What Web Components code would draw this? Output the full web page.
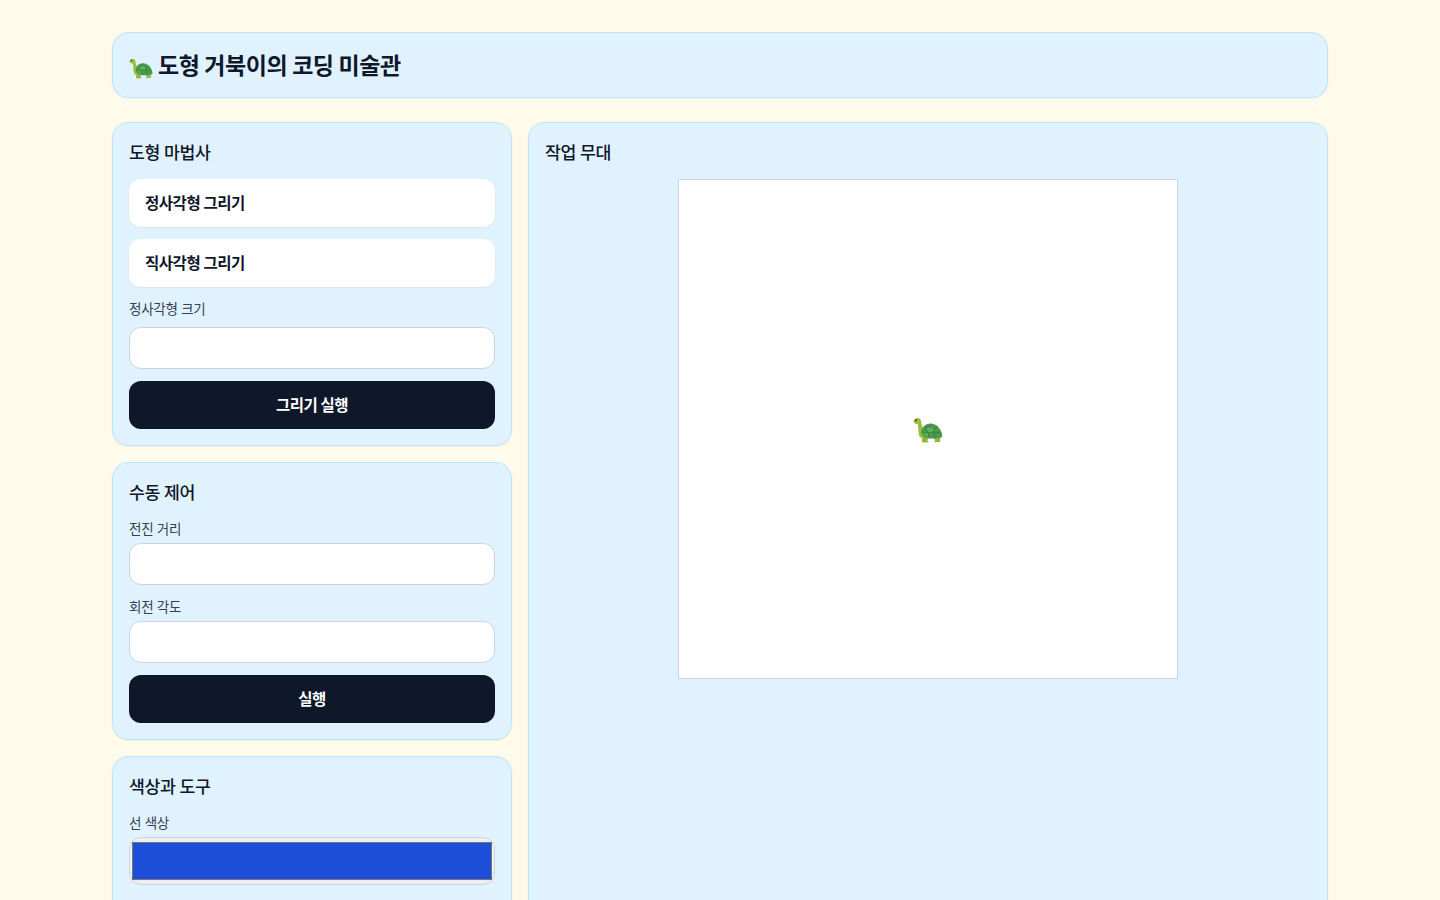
<!DOCTYPE html>
<html lang="ko"><head><meta charset="utf-8"><title>도형 거북이의 코딩 미술관</title>
<style>
html,body{margin:0;padding:0;background:#fffbeb}
body{font-family:Inter,"Noto Sans CJK KR",sans-serif;color:#0f172a}
</style></head><body>
<turtle-app>
  <app-panel slot="header" kind="header"><h-title><turtle-icon size="24"></turtle-icon> 도형 거북이의 코딩 미술관</h-title></app-panel>
  <app-panel slot="left" heading="도형 마법사">
    <wizard-button>정사각형 그리기</wizard-button>
    <wizard-button>직사각형 그리기</wizard-button>
    <field-input label="정사각형 크기" gap="8"></field-input>
    <run-button>그리기 실행</run-button>
  </app-panel>
  <app-panel slot="left" heading="수동 제어">
    <field-input label="전진 거리"></field-input>
    <field-input label="회전 각도"></field-input>
    <run-button>실행</run-button>
  </app-panel>
  <app-panel slot="left" heading="색상과 도구" tall>
    <field-input label="선 색상" type="color" value="#1d4ed8"></field-input>
  </app-panel>
  <app-panel slot="right" heading="작업 무대" fill>
    <turtle-stage></turtle-stage>
  </app-panel>
</turtle-app>
<script>
function def(name,css,html){
  customElements.define(name,class extends HTMLElement{
    connectedCallback(){
      if(this.shadowRoot)return;
      const r=this.attachShadow({mode:'open'});
      r.innerHTML='<style>'+css+'</style>'+(typeof html==='function'?html(this):html);
    }
  });
}
def('turtle-app',
 ':host{display:block;box-sizing:border-box;max-width:1280px;margin:0 auto;padding:32px}.g{display:grid;grid-template-columns:400px 1fr;gap:16px;margin-top:24px}.l{display:flex;flex-direction:column;gap:16px}.r{display:flex}',
 '<slot name="header"></slot><div class="g"><div class="l"><slot name="left"></slot></div><div class="r"><slot name="right"></slot></div></div>');
def('h-title',
 ':host{display:block;box-sizing:border-box;height:32px;padding-top:2px;font-size:23px;line-height:30px;font-weight:700;letter-spacing:-.02em;color:#0f172a}',
 '<slot></slot>');
def('turtle-icon',
 ':host{display:inline-block;vertical-align:-5px;line-height:0;letter-spacing:0}svg{display:block}',
 h=>{const s=+h.getAttribute('size')||30;return `<svg role="img" aria-label="turtle" width="${s}" height="${s*26/30}" viewBox="0 0 30 26">
  <path d="M25 20 L29.5 19.5 L26 22.5Z" fill="#86a532"/>
  <path d="M2 2.2 C4 0 7.4 .8 8 4 C8.5 7 9 10 11 13 L14 21 L7 20.5 C5 16 5.5 10 4.8 7 C3 7 .4 6 .4 4.4 C.4 3.6 1.2 2.8 2 2.2Z" fill="#9cbc3f"/>
  <path d="M9 20 L15 20 L14.5 24 L16 25.2 L9.5 25.5 C8.6 24 9 22 9 20Z" fill="#96b53a"/>
  <path d="M20 19 L27 19 L27.4 24.8 L21 25.3 L22.2 23.4 C21.2 22 20.4 20.5 20 19Z" fill="#96b53a"/>
  <path d="M8.2 16 C8.5 10 12.5 6.6 17.5 6.6 C23.5 6.6 28.5 12 29.4 19 C28 20.8 23 21.6 18 21.6 C13.5 21.6 10 20 8.2 16Z" fill="#4a9a4c"/>
  <path d="M12.5 10.5 L17 9.5 L21.5 11.5 L20.5 15 L15 15.5Z M8.8 15.5 L15 15.5 L16 21.4 M20.5 15 L27.5 16 M20.5 15 L22 21 M17 9.5 L17.5 6.8 M21.5 11.5 L24.5 9.8" fill="#5eae5e" stroke="#357f45" stroke-width=".8"/>
  <circle cx="2.9" cy="3.2" r=".9" fill="#26331a"/>
 </svg>`});
def('app-panel',
 `:host{display:block;box-sizing:border-box;background:#e0f2fe;border:1px solid #bae6fd;border-radius:16px;padding:16px;box-shadow:0 1px 2px rgba(0,0,0,.05)}
  :host([fill]){flex:1}
  :host([tall]){min-height:200px}
  h2{margin:0;font-size:17.25px;line-height:28px;font-weight:500;letter-spacing:-.025em;color:#0f172a}
  .b{display:flex;flex-direction:column;gap:12px;margin-top:12px}
  :host([kind=header]) .b{margin:0}`,
 h=>(h.getAttribute('heading')?'<h2>'+h.getAttribute('heading')+'</h2>':'')+'<div class="b"><slot></slot></div>');
def('wizard-button',
 ':host{display:block}button{display:block;box-sizing:border-box;width:100%;height:48px;padding:2px 16px 0;border:0;border-radius:12px;background:#fff;color:#0f172a;font:700 15.5px/24px Inter,"Noto Sans CJK KR",sans-serif;letter-spacing:-.03em;text-align:left;box-shadow:0 1px 2px rgba(0,0,0,.05)}',
 '<button type="button"><slot></slot></button>');
def('run-button',
 ':host{display:block}button{display:block;box-sizing:border-box;width:100%;height:48px;padding:2px 0 0;border:0;border-radius:12px;background:#0f172a;color:#fff;font:700 15.5px/24px Inter,"Noto Sans CJK KR",sans-serif;letter-spacing:-.03em;text-align:center}',
 '<button type="button"><slot></slot></button>');
def('field-input',
 `:host{display:block}
  label{display:block;font-size:13.5px;line-height:20px;letter-spacing:-.02em;color:#334155;margin-bottom:4px}
  :host([gap="8"]) label{margin-bottom:8px}
  input{display:block;box-sizing:border-box;width:100%;height:42px;border:1px solid #cbd5e1;border-radius:12px;background:#fff;padding:8px 12px;margin:0;font:14px Inter,"Noto Sans CJK KR",sans-serif}
  input[type=color]{height:48px;padding:0;background:#efefef}
  input[type=color]::-webkit-color-swatch-wrapper{padding:4px 2px}
  input[type=color]::-webkit-color-swatch{border:1px solid #767676;border-radius:0}`,
 h=>'<label>'+h.getAttribute('label')+'</label><input type="'+(h.getAttribute('type')||'text')+'"'+(h.getAttribute('value')?' value="'+h.getAttribute('value')+'"':'')+'>');
def('turtle-stage',
 `:host{display:block}
  .s{box-sizing:border-box;width:500px;height:500px;margin:0 auto;padding-top:2px;background:#fff;border:1px solid #cbd5e1;display:flex;align-items:center;justify-content:center}`,
 '<div class="s"><turtle-icon size="30"></turtle-icon></div>');
</script>
</body></html>
